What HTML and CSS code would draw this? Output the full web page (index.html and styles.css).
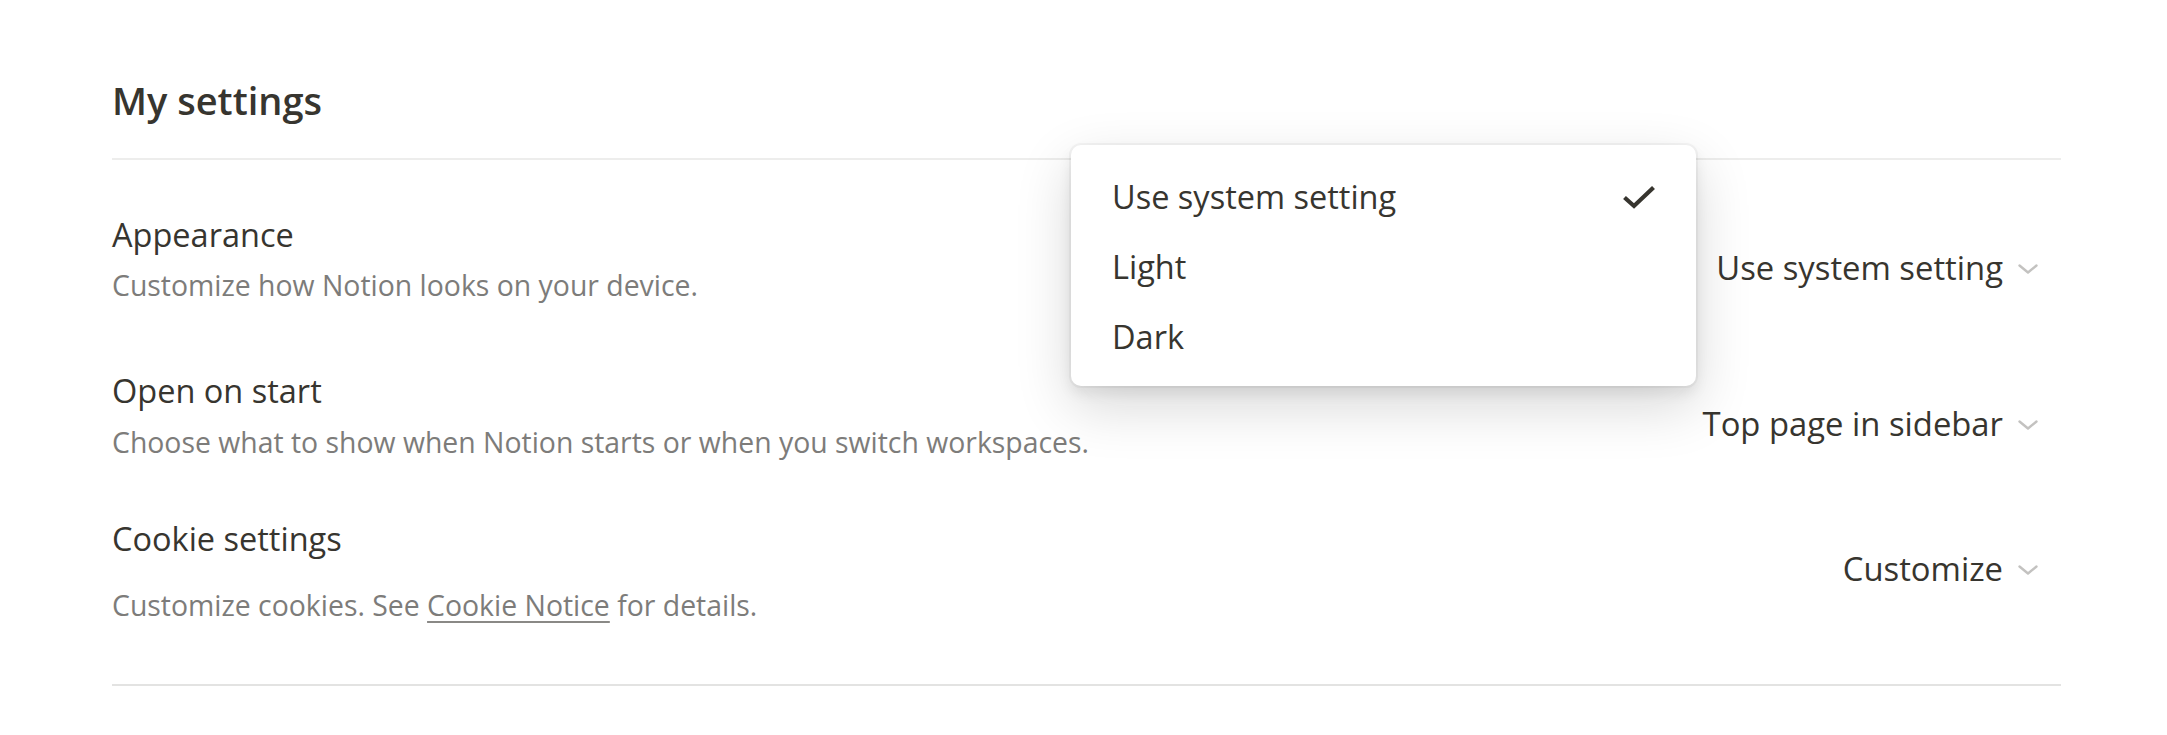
FILE: index.html
```html
<!DOCTYPE html>
<html lang="en">
<head>
<meta charset="utf-8">
<title>My settings</title>
<link rel="stylesheet" href="styles.css">
</head>
<body>
<div class="page">
  <h1 class="page-title">My settings</h1>
  <div class="divider"></div>
  <div class="rows">
    <div class="row">
      <div class="row-text">
        <div class="row-title">Appearance</div>
        <div class="row-desc">Customize how Notion looks on your device.</div>
      </div>
      <div class="control">
        <span class="control-value">Use system setting</span>
        <svg class="chevron" width="20" height="10" viewBox="0 0 20 10"><path d="M1.5 1.5 L10 8.5 L18.5 1.5" fill="none" stroke="currentColor" stroke-width="2.4" stroke-linecap="round" stroke-linejoin="round"/></svg>
      </div>
    </div>
    <div class="row row-start">
      <div class="row-text">
        <div class="row-title">Open on start</div>
        <div class="row-desc">Choose what to show when Notion starts or when you switch workspaces.</div>
      </div>
      <div class="control">
        <span class="control-value">Top page in sidebar</span>
        <svg class="chevron" width="20" height="10" viewBox="0 0 20 10"><path d="M1.5 1.5 L10 8.5 L18.5 1.5" fill="none" stroke="currentColor" stroke-width="2.4" stroke-linecap="round" stroke-linejoin="round"/></svg>
      </div>
    </div>
    <div class="row row-cookie">
      <div class="row-text">
        <div class="row-title">Cookie settings</div>
        <div class="row-desc">Customize cookies. See <a class="link" href="#">Cookie Notice</a> for details.</div>
      </div>
      <div class="control">
        <span class="control-value">Customize</span>
        <svg class="chevron" width="20" height="10" viewBox="0 0 20 10"><path d="M1.5 1.5 L10 8.5 L18.5 1.5" fill="none" stroke="currentColor" stroke-width="2.4" stroke-linecap="round" stroke-linejoin="round"/></svg>
      </div>
    </div>
  </div>
  <div class="divider divider-bottom"></div>

  <div class="menu">
    <div class="menu-item">
      <span>Use system setting</span>
      <svg class="check" width="34" height="24" viewBox="0 0 34 24"><polyline points="2.5,12.5 12,21 31.5,2.5" fill="none" stroke="#37352f" stroke-width="4.2" stroke-linejoin="miter"/></svg>
    </div>
    <div class="menu-item"><span>Light</span></div>
    <div class="menu-item"><span>Dark</span></div>
  </div>
</div>
</body>
</html>
```
FILE: styles.css
```css
html, body {
  margin: 0;
  padding: 0;
  background: #ffffff;
}

body {
  font-family: "Open Sans", "Noto Sans", sans-serif;
  color: #37352f;
}

.page {
  position: relative;
  width: 1949px;
  padding: 74px 0 0 112px;
}

.page-title {
  margin: 0;
  font-size: 38px;
  font-weight: 600;
  line-height: 52px;
  color: #37352f;
}

.divider {
  height: 2px;
  background: #ededec;
  margin-top: 32px;
}

.divider-bottom {
  margin-top: 59.5px;
  background: #e3e3e2;
}

.rows {
  display: flex;
  flex-direction: column;
  margin-top: 52.5px;
}

.row {
  display: flex;
  justify-content: space-between;
  align-items: flex-start;
}

.row-start {
  margin-top: 65px;
}

.row-cookie {
  margin-top: 56px;
}

.row-text {
  display: flex;
  flex-direction: column;
}

.row-title {
  font-size: 32.5px;
  line-height: 44px;
  color: #37352f;
}

.row-desc {
  margin-top: 9px;
  font-size: 28.4px;
  line-height: 38px;
  color: #7d7c7a;
}

.row-start .row-desc {
  margin-top: 10.5px;
}

.row-cookie .row-desc {
  margin-top: 25px;
}

.link {
  color: #7d7c7a;
  text-decoration: underline;
  text-decoration-thickness: 2px;
  text-underline-offset: 5px;
  text-decoration-color: #8a8986;
}

.control {
  display: flex;
  align-items: center;
  margin-top: 33.5px;
  padding-right: 23px;
  font-size: 32.8px;
  line-height: 44px;
  color: #37352f;
}

.row-cookie .control {
  margin-top: 30px;
}

.chevron {
  margin-left: 15px;
  margin-top: 2px;
  color: #c3c2c0;
}

.menu {
  position: absolute;
  left: 1071px;
  top: 145px;
  width: 625px;
  padding: 17px 0 14px;
  background: #ffffff;
  border-radius: 10px;
  box-shadow:
    0 0 0 2px rgba(15, 15, 15, 0.04),
    0 7px 14px rgba(15, 15, 15, 0.08),
    0 20px 56px rgba(15, 15, 15, 0.16);
}

.menu-item {
  display: flex;
  align-items: center;
  justify-content: space-between;
  height: 70px;
  padding: 0 40px 0 41px;
  font-size: 32.5px;
  line-height: 44px;
  color: #37352f;
}

.check {
  display: block;
}
```
